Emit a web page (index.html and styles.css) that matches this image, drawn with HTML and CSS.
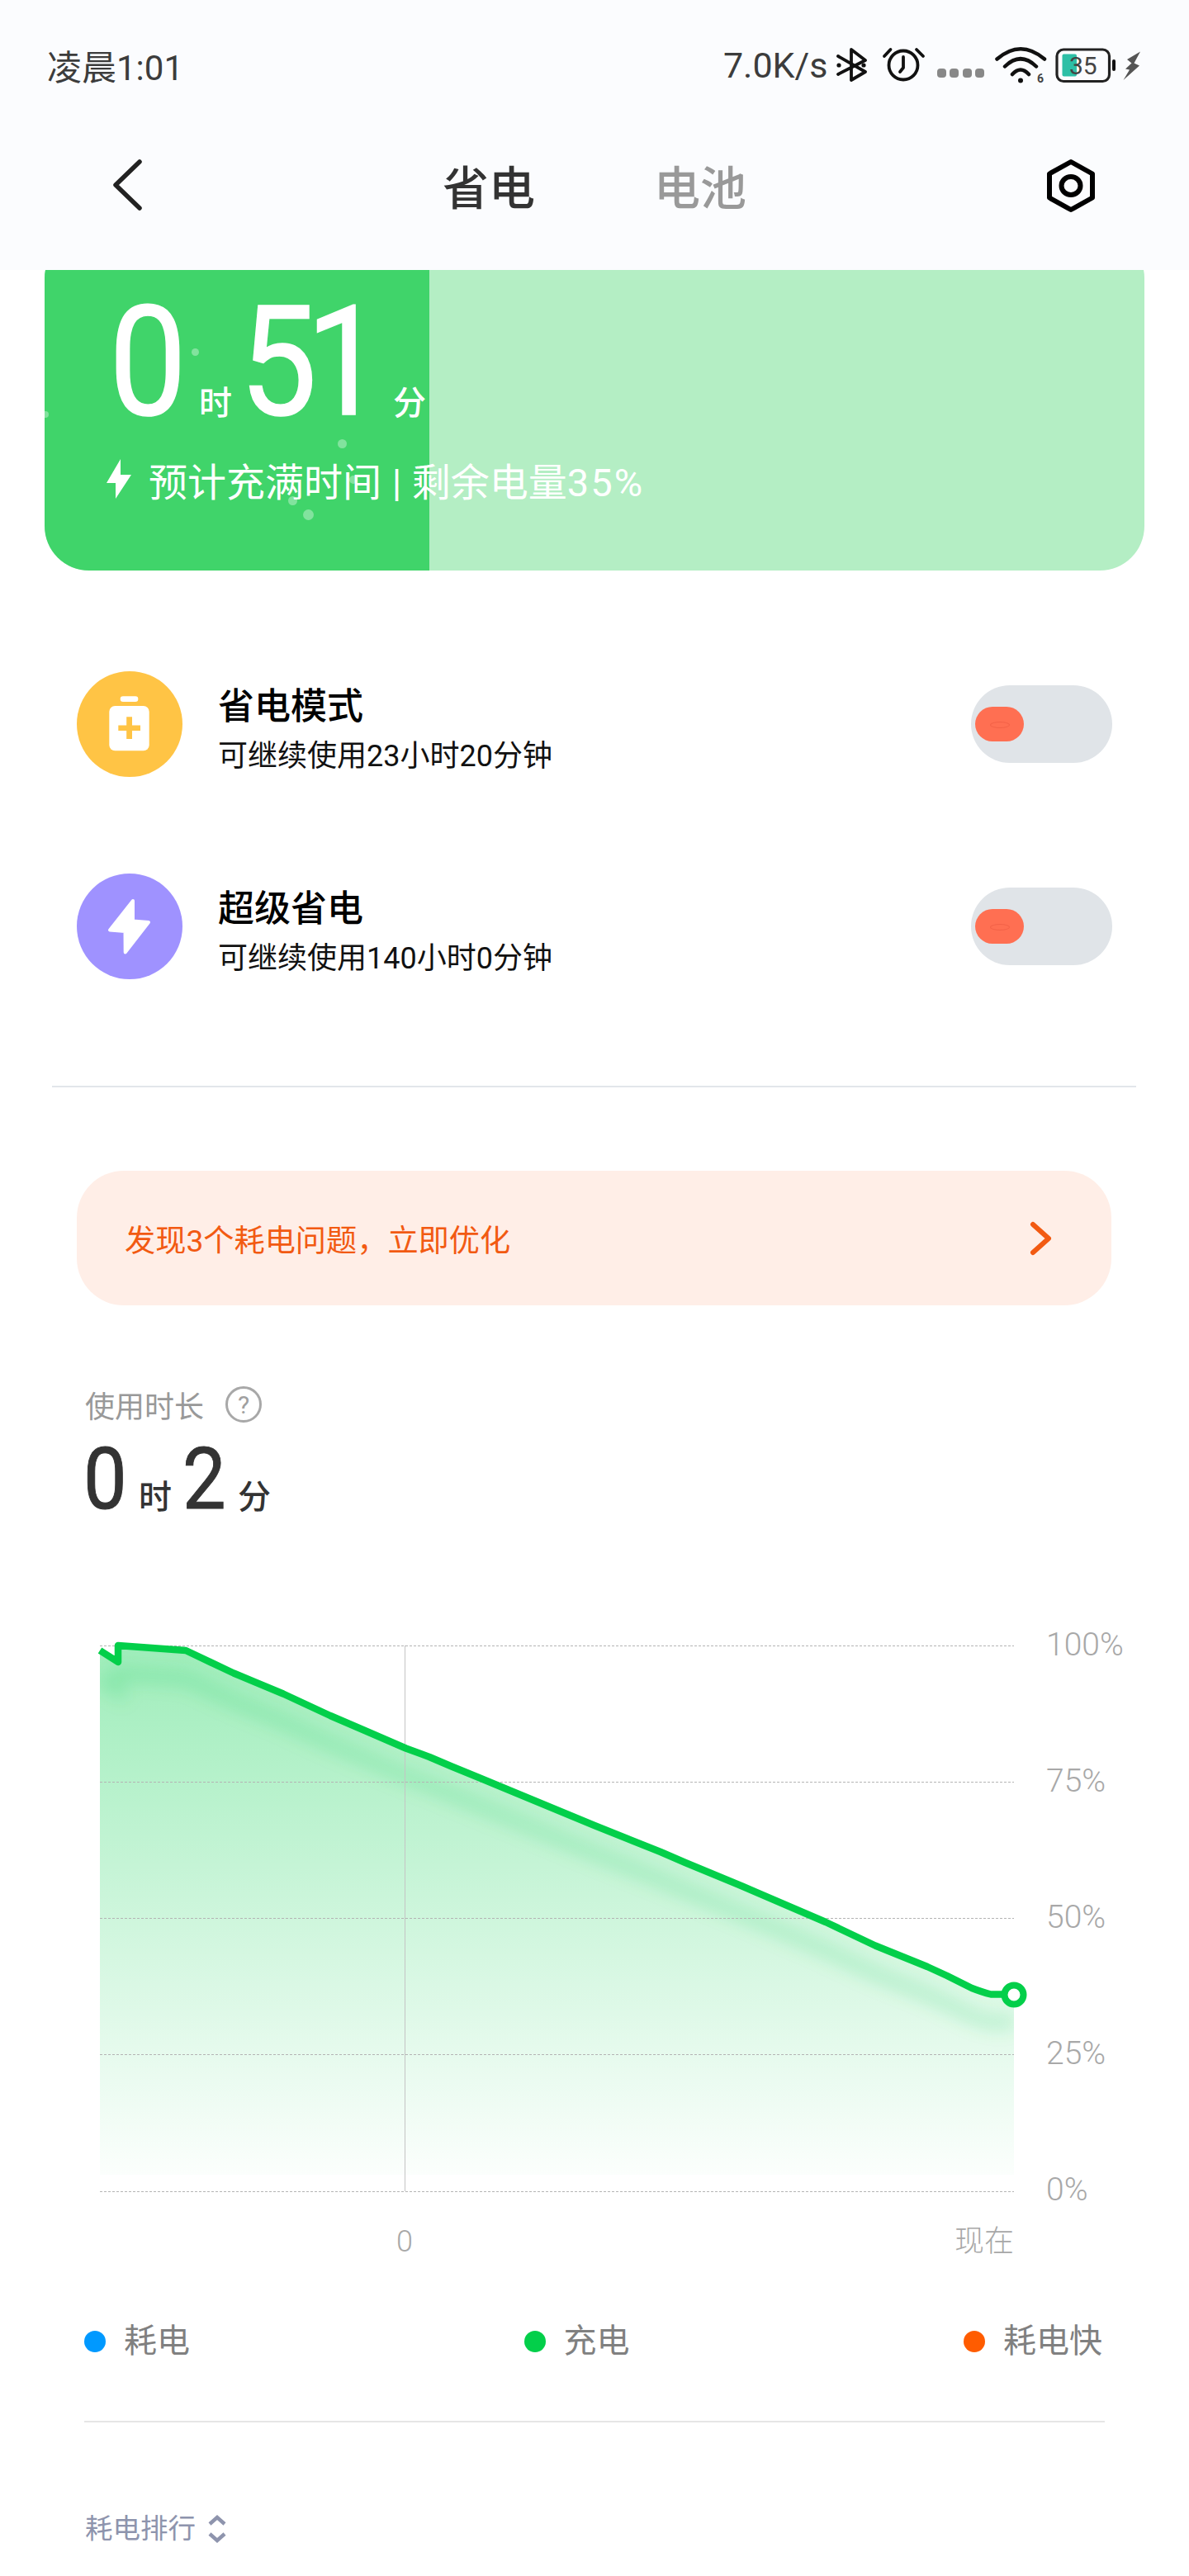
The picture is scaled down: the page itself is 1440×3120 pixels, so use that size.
FILE: index.html
```html
<!DOCTYPE html>
<html lang="zh-CN">
<head>
<meta charset="utf-8">
<title>省电</title>
<link rel="stylesheet" href="styles.css">
</head>
<body>
<header class="header">
  <div class="status">
    <span class="status-time">凌晨1:01</span>
    <div class="status-right">
      <span class="speed">7.0K/s</span>
      <svg class="si si-bt" viewBox="1008 54 58 50"><path class="st" d="M1015 68L1048 87L1031 97V60L1048 73L1015 90"/><circle class="sf" cx="1016" cy="79" r="2.6"/><circle class="sf" cx="1046" cy="79" r="2.6"/></svg>
      <svg class="si si-alarm" viewBox="1066 54 64 50"><circle class="st" cx="1094" cy="79" r="17.5"/><path class="st" d="M1094 69V82L1090 87M1071 68L1078.5 60M1110 60L1118 68"/></svg>
      <div class="sig"><i></i><i></i><i></i><i></i></div>
      <svg class="si si-wifi" viewBox="1200 54 72 50"><path class="st st-w" d="M1207.5 71.5Q1236 47 1265 71.5M1217 80.5Q1236 62 1255 80.5M1226 90Q1236 79 1246 90"/><circle class="sf" cx="1236" cy="97.5" r="3"/><text class="wifi-n" x="1256" y="100">6</text></svg>
      <svg class="si si-bat" viewBox="1276 54 78 50"><rect class="bat-fill" x="1286.5" y="65.5" width="17.5" height="27" rx="2"/><rect class="st st-b" x="1280" y="60" width="63.5" height="38.5" rx="8"/><rect class="sf" x="1347" y="72" width="4" height="14" rx="2"/><text class="bat-n" x="1295" y="90">35</text></svg>
      <svg class="si si-bolt" viewBox="1358 54 26 50"><path class="bolt-f" d="M1381 62.5L1365 72L1370.5 76.5L1363 83.5L1368 84.5L1360.5 97L1380 79.5L1373.5 76.5Z"/></svg>
    </div>
  </div>
  <nav class="nav">
    <svg class="back" viewBox="0 0 50 70"><path d="M39 3L10 31L39 59"/></svg>
    <div class="tabs"><span class="tab tab-on">省电</span><span class="tab">电池</span></div>
    <svg class="gear" viewBox="0 0 74 74"><path class="gear-p" d="M37 8L63 22.5V51.5L37 66L11 51.5V22.5Z"/><ellipse class="gear-p" cx="37" cy="37" rx="11.5" ry="11"/></svg>
  </nav>
</header>

<section class="card">
  <div class="card-fill"></div>
  <i class="fleck f1"></i><i class="fleck f2"></i><i class="fleck f3"></i><i class="fleck f4"></i><i class="fleck f5"></i><i class="fleck f6"></i>
  <div class="time">
    <span class="big big-0">0</span><span class="unit">时</span><span class="big big-51">51</span><span class="unit">分</span>
  </div>
  <div class="card-sub">
    <svg class="card-bolt" viewBox="0 0 30 48"><path d="M17 0L0 29H11L11 48L30 19H17Z"/></svg>
    <span>预计充满时间 | 剩余电量<span class="pct">35%</span></span>
  </div>
</section>

<section class="modes">
  <div class="mode">
    <svg class="mode-ico" viewBox="0 0 128 128"><circle class="c-y" cx="64" cy="64" r="64"/><rect class="w" x="52.7" y="30.3" width="21.6" height="6.7" rx="3.3"/><rect class="w" x="39.3" y="42" width="48.4" height="54.3" rx="7"/><path class="c-yf" d="M60.2 55.3h6.8v10.1h10v6.6h-10v10h-6.8v-10h-9.9v-6.6h9.9z"/></svg>
    <div class="mode-text"><div class="mode-title">省电模式</div><div class="mode-sub">可继续使用23小时20分钟</div></div>
    <div class="toggle"><span class="knob"></span></div>
  </div>
  <div class="mode">
    <svg class="mode-ico" viewBox="0 0 128 128"><circle class="c-p" cx="64" cy="64" r="64"/><path class="w w-round" d="M68 33L40 68.5L58.5 70L58.7 95.5L87 59L68 57.5Z"/></svg>
    <div class="mode-text"><div class="mode-title">超级省电</div><div class="mode-sub">可继续使用140小时0分钟</div></div>
    <div class="toggle"><span class="knob"></span></div>
  </div>
</section>

<hr class="rule-a">

<div class="banner">
  <span>发现3个耗电问题，立即优化</span>
  <svg class="banner-arrow" viewBox="0 0 30 44"><path d="M5 5L24 22L5 39"/></svg>
</div>

<div class="usage-label"><span>使用时长</span><span class="help">?</span></div>
<div class="usage-time">
  <span class="mid">0</span><span class="mid-u mid-h">时</span><span class="mid">2</span><span class="mid-u">分</span>
</div>

<div class="chart">
  <svg class="plot" viewBox="121 1985 1123 675">
    <defs>
      <linearGradient id="area" gradientUnits="userSpaceOnUse" x1="0" y1="1993" x2="0" y2="2660">
        <stop offset="0" stop-color="#00cf4a" stop-opacity=".38"/>
        <stop offset="1" stop-color="#00cf4a" stop-opacity="0"/>
      </linearGradient>
      <clipPath id="areaClip"><path d="M121 1999L143 2013V1993L225 1999L283 2026.5L343 2051.5L400 2078L443 2096.5L491.5 2117.5L520 2128L547 2139.5L580 2153L650 2182L720 2211L800 2243L830 2256L900 2285L1000 2328L1060 2356.5L1123 2382L1147 2393L1177 2408L1200 2415.5H1228V2634H121Z"/></clipPath>
      <filter id="soft" x="-5%" y="-15%" width="110%" height="130%"><feGaussianBlur stdDeviation="10"/></filter>
    </defs>
    <path class="area" d="M121 1999L143 2013V1993L225 1999L283 2026.5L343 2051.5L400 2078L443 2096.5L491.5 2117.5L520 2128L547 2139.5L580 2153L650 2182L720 2211L800 2243L830 2256L900 2285L1000 2328L1060 2356.5L1123 2382L1147 2393L1177 2408L1200 2415.5H1228V2634H121Z"/>
    <g clip-path="url(#areaClip)"><path class="glow" filter="url(#soft)" d="M121 2033L143 2047V2027L225 2033L283 2060.5L343 2085.5L400 2112L443 2130.5L491.5 2151.5L520 2162L547 2173.5L580 2187L650 2216L720 2245L800 2277L830 2290L900 2319L1000 2362L1060 2390.5L1123 2416L1147 2427L1177 2442L1200 2449.5H1228"/></g>
    <path class="grid" d="M121 1993.5H1228M121 2158.5H1228M121 2323.5H1228M121 2488.5H1228M121 2654.5H1228"/>
    <path class="vline" d="M490.5 1993V2654"/>
    <path class="line" d="M121 1999L143 2013V1993L225 1999L283 2026.5L343 2051.5L400 2078L443 2096.5L491.5 2117.5L520 2128L547 2139.5L580 2153L650 2182L720 2211L800 2243L830 2256L900 2285L1000 2328L1060 2356.5L1123 2382L1147 2393L1177 2408Q1190 2413 1200 2415.5H1228"/>
    <circle class="end" cx="1228" cy="2416" r="11.5"/>
  </svg>
  <div class="yaxis"><span>100%</span><span>75%</span><span>50%</span><span>25%</span><span>0%</span></div>
</div>
<div class="xaxis"><span>0</span><span>现在</span></div>

<div class="legend">
  <div class="lg"><i class="dot d-blue"></i><span>耗电</span></div>
  <div class="lg"><i class="dot d-green"></i><span>充电</span></div>
  <div class="lg"><i class="dot d-orange"></i><span>耗电快</span></div>
</div>

<hr class="rule-b">

<div class="rank">
  <span>耗电排行</span>
  <svg class="rank-ico" viewBox="0 0 24 34"><path d="M3 11L12 3L21 11M3 23L12 31L21 23"/></svg>
</div>
</body>
</html>
```
FILE: styles.css
```css
* { box-sizing: border-box; }
html, body { margin: 0; padding: 0; background: #fff; }
body {
  width: 1440px;
  height: 3120px;
  overflow: hidden;
  font-family: Roboto, "Noto Sans CJK SC", sans-serif;
  color: #333;
}

/* header */
.header { position: relative; z-index: 2; height: 327px; background: #fbfcfe; }
.status { height: 158px; display: flex; align-items: center; justify-content: space-between; padding: 0 56px 0 57px; }
.status-time { font-size: 42px; color: #3c3c3c; margin-top: -2px; }
.status-right { display: flex; align-items: center; }
.speed { font-size: 43px; color: #3c3c3c; margin-right: 5px; }
.si { height: 50px; display: block; }
.si-bt { width: 58px; }
.si-alarm { width: 64px; }
.si-wifi { width: 72px; margin-left: 8px; }
.si-bat { width: 78px; margin-left: 4px; }
.si-bolt { width: 26px; margin-left: 4px; }
.st { fill: none; stroke: #111; stroke-width: 3.8; stroke-linejoin: round; stroke-linecap: round; }
.st-w { stroke-width: 4.5; }
.st-b { stroke-width: 3.2; stroke: #222; }
.sf { fill: #111; }
.bat-fill { fill: #2dbfa6; }
.bat-n { font-size: 30px; fill: #444; font-family: Roboto, sans-serif; }
.wifi-n { font-size: 14px; font-weight: 700; fill: #444; font-family: Roboto, sans-serif; }
.bolt-f { fill: #555; }
.sig { display: flex; gap: 4.5px; margin: 19px 0 0 5px; }
.sig i { width: 11px; height: 11px; border-radius: 4px; background: #888; }

.nav { height: 134px; display: flex; align-items: center; padding: 0 106px 0 130px; }
.back { width: 50px; height: 70px; margin-top: 6px; }
.back path { fill: none; stroke: #222; stroke-width: 5.5; stroke-linecap: round; stroke-linejoin: round; }
.tabs { display: flex; gap: 144px; margin: 7px 0 0 356px; }
.tab { font-size: 56px; font-weight: 500; color: #999; line-height: 70px; }
.tab-on { color: #333; }
.gear { width: 74px; height: 74px; margin-left: auto; }
.gear-p { fill: none; stroke: #000; stroke-width: 6; stroke-linejoin: round; }

/* battery card */
.card { position: relative; margin: -44px 54px 0; height: 408px; border-radius: 54px; background: #b4eec4; overflow: hidden; color: #fff; }
.card-fill { position: absolute; left: 0; top: 0; bottom: 0; width: 466px; background: #40d46a; }
.fleck { position: absolute; border-radius: 50%; background: rgba(255,255,255,.35); }
.f1 { left: 178px; top: 139px; width: 9px; height: 9px; }
.f2 { left: 355px; top: 249px; width: 11px; height: 11px; }
.f3 { left: 295px; top: 318px; width: 11px; height: 11px; }
.f4 { left: 313px; top: 334px; width: 13px; height: 13px; }
.f5 { left: 369px; top: 293px; width: 10px; height: 10px; }
.f6 { left: -3px; top: 215px; width: 8px; height: 8px; }
.time { position: relative; display: flex; align-items: baseline; height: 247px; padding: 64px 0 0 78px; }
.big { font-size: 186px; font-weight: 400; -webkit-text-stroke: 1.5px #fff; line-height: 183px; display: inline-block; transform-origin: left center; transform: scaleX(.9); }
.big-0 { width: 109px; }
.big-51 { width: 186px; letter-spacing: -15px; margin-left: 9px; }
.unit { font-size: 40px; font-weight: 500; line-height: 50px; }
.card-sub { position: relative; display: flex; align-items: center; padding: 0 0 0 75px; margin-top: 26px; height: 48px; font-size: 47px; word-spacing: 1px; white-space: nowrap; }
.pct { letter-spacing: 2px; }
.card-bolt { width: 30px; height: 48px; margin-right: 21px; flex: none; }
.card-bolt path { fill: #fff; }

/* modes */
.modes { padding: 122px 93px 0; display: flex; flex-direction: column; gap: 117px; }
.mode { display: flex; height: 128px; align-items: flex-start; }
.mode-ico { width: 128px; height: 128px; flex: none; }
.c-y { fill: #ffc445; }
.c-yf { fill: #ffc445; }
.c-p { fill: #9f92ff; }
.w { fill: #fff; }
.w-round { stroke: #fff; stroke-width: 4; stroke-linejoin: round; }
.mode-text { margin-left: 43px; padding-top: 15px; color: #000; }
.mode-title { font-size: 44px; line-height: 56px; font-weight: 500; }
.mode-sub { font-size: 36px; line-height: 50px; margin-top: 7px; color: #111; }
.toggle { margin: 17px 0 0 auto; width: 171px; height: 94px; border-radius: 47px; background: #e0e4e8; display: flex; align-items: center; padding-left: 5px; }
.knob { position: relative; display: block; width: 59px; height: 42px; border-radius: 21px; background: #ff6f52; }
.knob::after { content: ""; position: absolute; left: 18px; top: 18px; width: 22px; height: 6px; border-radius: 50%; border: 1px solid rgba(214,70,50,.3); }

.rule-a { margin: 129px 64px 0 63px; border: 0; height: 2px; background: #e2e6ea; }

/* banner */
.banner { margin: 101px 94px 0 93px; height: 163px; border-radius: 57px; background: #ffeee7; display: flex; align-items: center; justify-content: space-between; padding: 0 70px 0 58px; font-size: 37.2px; color: #f25a12; }
.banner-arrow { width: 30px; height: 44px; }
.banner-arrow path { fill: none; stroke: #f25a12; stroke-width: 6; stroke-linecap: round; stroke-linejoin: round; }

/* usage */
.usage-label { margin: 98px 0 0 103px; height: 44px; display: flex; align-items: center; gap: 26px; font-size: 36px; color: #999; }
.help { width: 44px; height: 44px; border-radius: 50%; border: 3px solid #a8a8a8; display: flex; align-items: center; justify-content: center; font-size: 30px; color: #a0a0a0; }
.usage-time { margin: 14px 0 0 101px; height: 110px; display: flex; align-items: baseline; color: #333; }
.mid { width: 58px; font-size: 104px; font-weight: 400; -webkit-text-stroke: 1px #333; line-height: 110px; display: inline-block; transform-origin: left center; transform: scaleX(.9); }
.mid-u { font-size: 40px; font-weight: 500; line-height: 50px; margin-left: 9px; }
.mid-h { margin-right: 13px; }

/* chart */
.chart { margin: 138px 0 0 121px; display: flex; align-items: flex-start; }
.plot { width: 1123px; height: 675px; flex: none; overflow: visible; display: block; }
.area { fill: url(#area); }
.glow { fill: none; stroke: #00c850; stroke-width: 18; stroke-opacity: .16; }
.grid { fill: none; stroke: #b4b4b4; stroke-width: 1; stroke-dasharray: 3 2; }
.vline { stroke: #c4c4c4; stroke-width: 1; }
.line { fill: none; stroke: #03cf4a; stroke-width: 8.5; stroke-linejoin: round; stroke-linecap: butt; }
.end { fill: #fff; stroke: #03cf4a; stroke-width: 8; }
.yaxis { margin: -13px 0 0 23px; display: flex; flex-direction: column; gap: 125px; font-size: 39px; font-weight: 300; color: #a8a8a8; }
.yaxis span { line-height: 40px; height: 40px; }
.xaxis { margin: 21px 0 0 121px; width: 1107px; display: flex; justify-content: space-between; padding-left: 359px; font-size: 36px; font-weight: 300; line-height: 44px; color: #a8a8a8; }

/* legend */
.legend { margin: 74px 105px 0 102px; display: flex; justify-content: space-between; }
.lg { display: flex; align-items: center; gap: 22px; font-size: 40px; line-height: 50px; color: #808080; }
.dot { width: 26px; height: 26px; border-radius: 50%; flex: none; }
.d-blue { background: #0099ff; }
.d-green { background: #03cf4a; }
.d-orange { background: #ff5c00; }

.rule-b { margin: 71px 102px 0; border: 0; height: 2px; background: #e6e6e6; }

.rank { margin: 99px 0 0 103px; display: flex; align-items: center; gap: 14px; font-size: 33.5px; line-height: 60px; color: #8e94ad; }
.rank-ico { width: 24px; height: 34px; }
.rank-ico path { fill: none; stroke: #8e94ad; stroke-width: 4.5; }
```
